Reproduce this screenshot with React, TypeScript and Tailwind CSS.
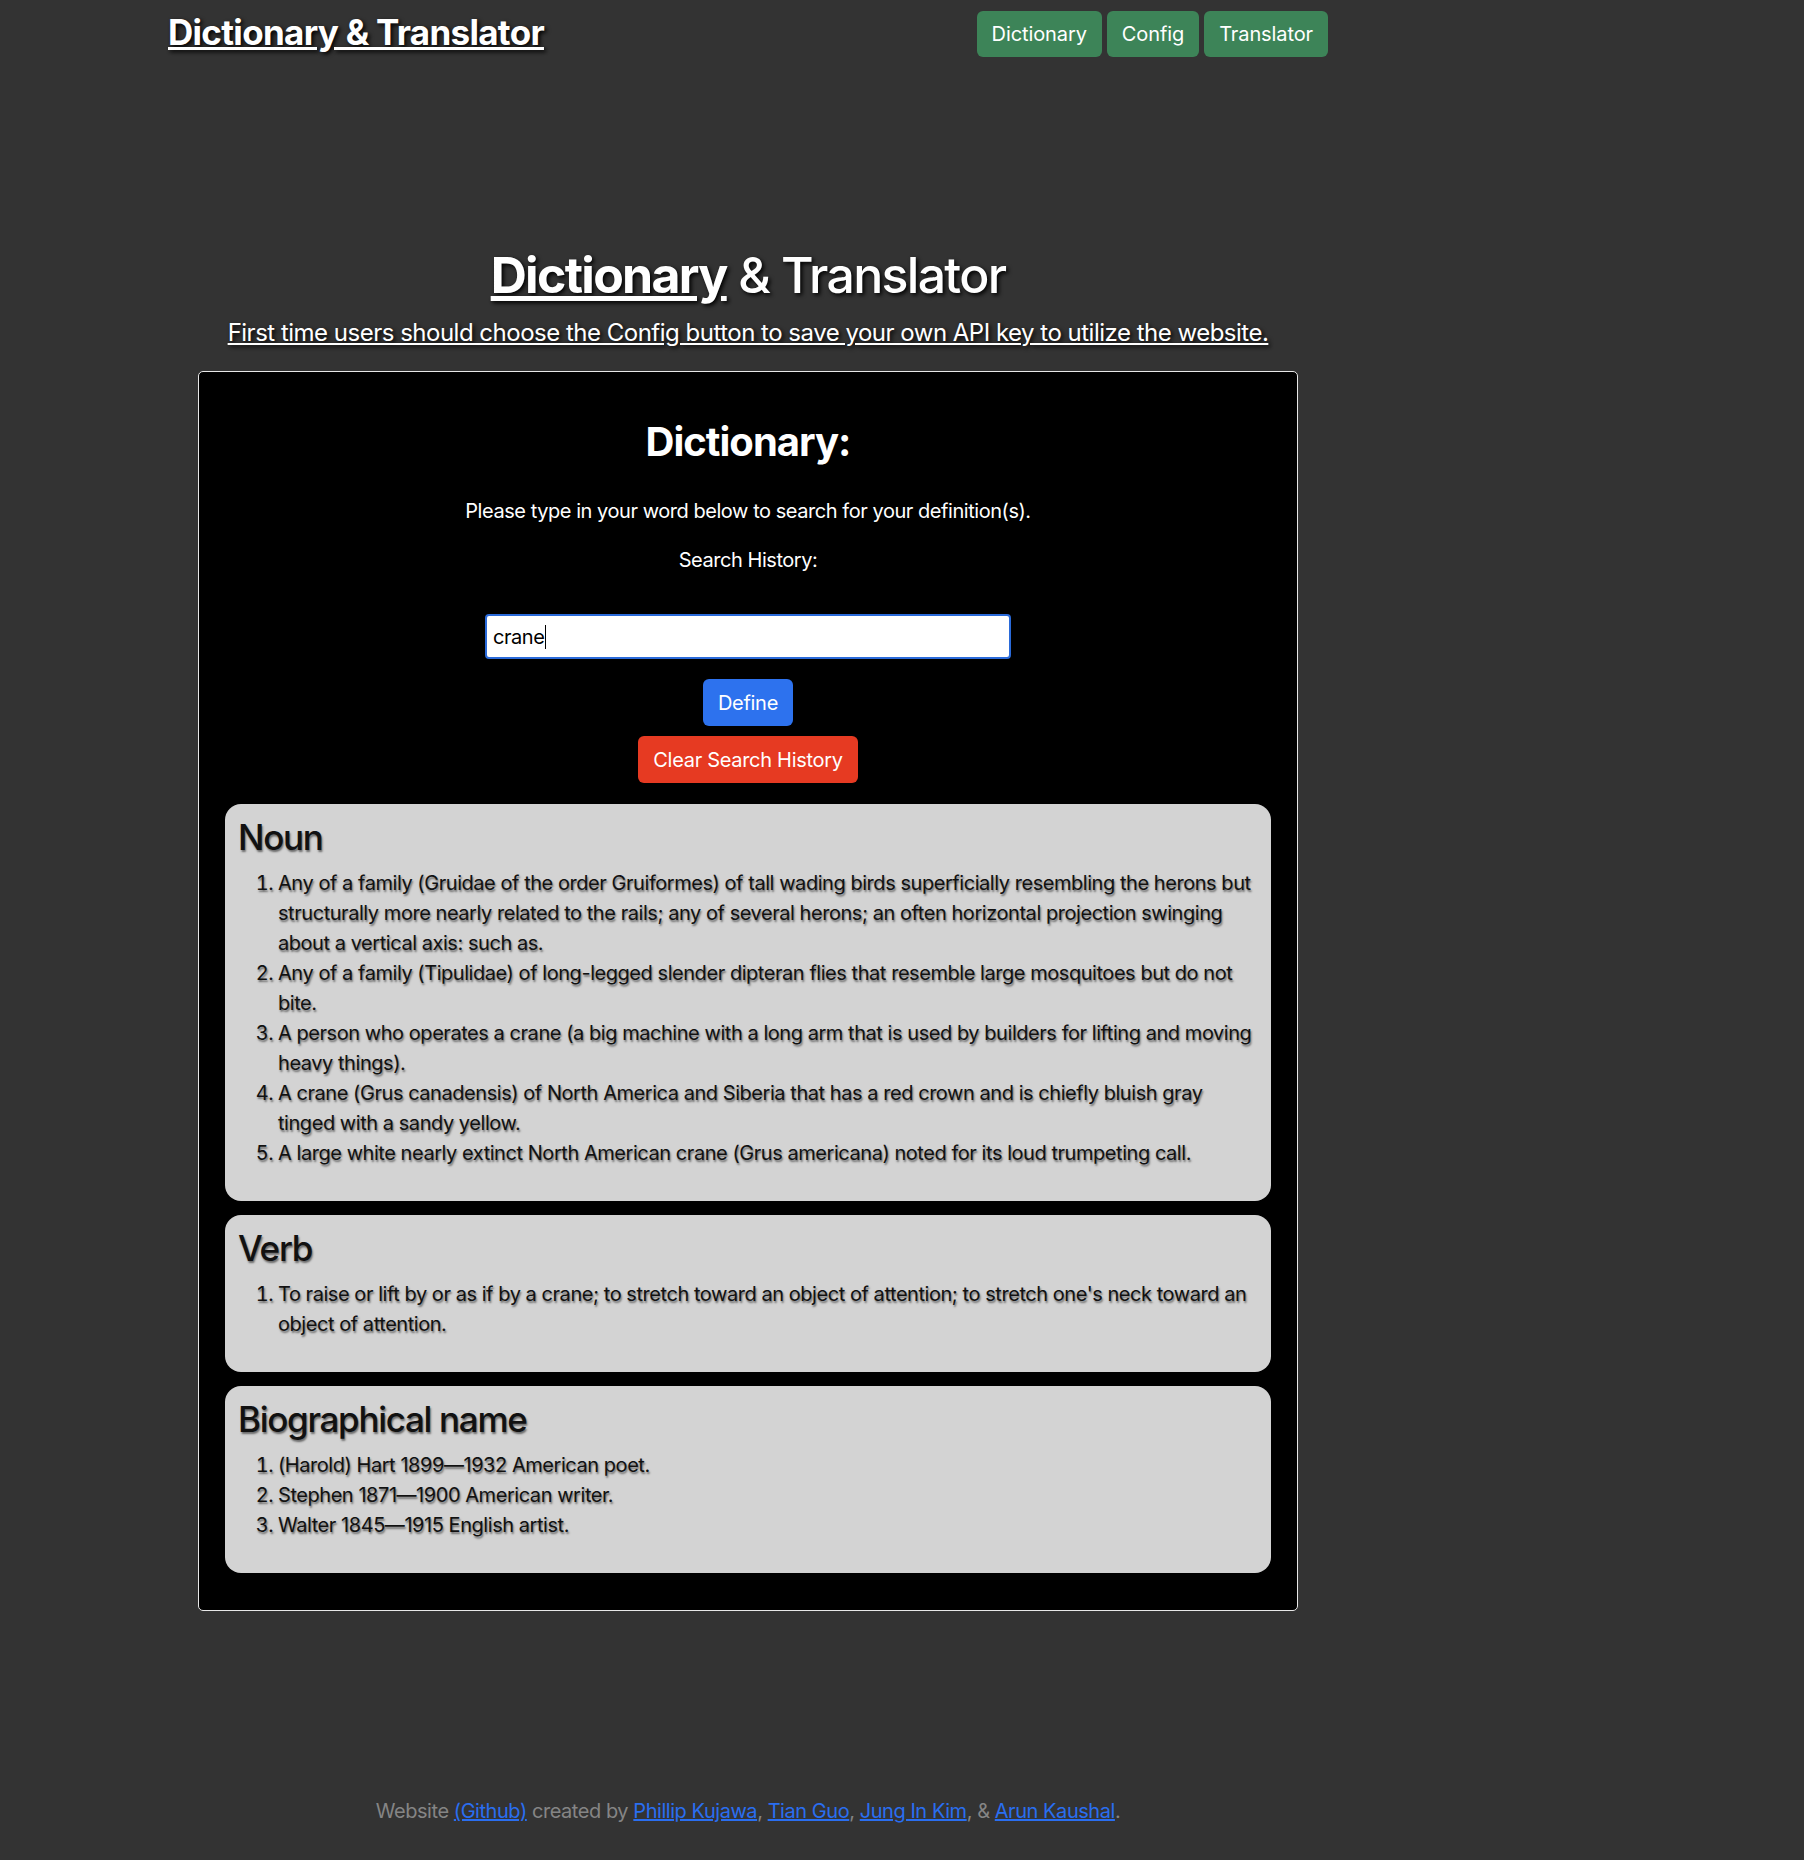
import React from "react"

const nounDefs = [
  "Any of a family (Gruidae of the order Gruiformes) of tall wading birds superficially resembling the herons but structurally more nearly related to the rails; any of several herons; an often horizontal projection swinging about a vertical axis: such as.",
  "Any of a family (Tipulidae) of long-legged slender dipteran flies that resemble large mosquitoes but do not bite.",
  "A person who operates a crane (a big machine with a long arm that is used by builders for lifting and moving heavy things).",
  "A crane (Grus canadensis) of North America and Siberia that has a red crown and is chiefly bluish gray tinged with a sandy yellow.",
  "A large white nearly extinct North American crane (Grus americana) noted for its loud trumpeting call.",
]

const verbDefs = [
  "To raise or lift by or as if by a crane; to stretch toward an object of attention; to stretch one's neck toward an object of attention.",
]

const bioDefs = [
  "(Harold) Hart 1899—1932 American poet.",
  "Stephen 1871—1900 American writer.",
  "Walter 1845—1915 English artist.",
]

function DefinitionBox({ title, items }: { title: string; items: string[] }) {
  return (
    <div className="rounded-[16px] bg-[#d3d3d3] pl-[13px] pr-[12px] pt-[12px] pb-[13px] text-[#111] [text-shadow:1px_2px_2px_rgba(0,0,0,0.5)]">
      <h3 className="mb-[10px] text-[35px] leading-[42px] font-medium tracking-[-1.3px]">{title}</h3>
      <ol className="mb-[20px] list-decimal pl-[40px] text-[20px] leading-[30px] tracking-[-0.45px]">
        {items.map((d) => (
          <li key={d}>{d}</li>
        ))}
      </ol>
    </div>
  )
}

function FooterLink({ children }: { children: React.ReactNode }) {
  return (
    <a href="#" className="text-[#2a6ef0] underline">
      {children}
    </a>
  )
}

export default function App() {
  return (
    <div className="min-h-screen bg-[#333333] font-[Inter,'Liberation_Sans',sans-serif] tracking-[-0.45px] text-white">
      <div className="ml-[168px] w-[1160px] pb-[33px]">
        {/* Header */}
        <header className="flex items-start justify-between pt-[11px]">
          <a
            href="#"
            className="text-[35px] leading-[42px] font-bold tracking-[-0.7px] underline [text-shadow:2px_2px_4px_#000]"
          >
            Dictionary &amp; Translator
          </a>
          <nav className="flex gap-[5px]">
            {["Dictionary", "Config", "Translator"].map((label) => (
              <button
                key={label}
                className="h-[46px] rounded-[6px] bg-[#3d8458] px-[15px] text-[20px] tracking-[-0.1px] text-white"
              >
                {label}
              </button>
            ))}
          </nav>
        </header>

        {/* Title */}
        <h1 className="mt-[188px] text-center text-[50px] leading-[60px] font-medium tracking-[-1.7px] [text-shadow:2px_2px_4px_#000]">
          <span className="font-bold underline">Dictionary</span> &amp; Translator
        </h1>
        <p className="mt-[10px] text-center text-[24px] leading-[36px] tracking-[-0.5px] underline [text-shadow:2px_2px_4px_#000]">
          First time users should choose the Config button to save your own API key to utilize the website.
        </p>

        {/* Dictionary card */}
        <section className="mx-[30px] mt-[20px] rounded-[5px] border border-[#e8e8e8] bg-black px-[26px] pt-[46px] pb-[37px]">
          <h2 className="text-center text-[40px] leading-[48px] font-bold tracking-[-1px]">Dictionary:</h2>
          <p className="mt-[30px] text-center text-[20px] leading-[30px]">
            Please type in your word below to search for your definition(s).
          </p>
          <p className="mt-[19px] text-center text-[20px] leading-[30px]">Search History:</p>

          <div className="mx-auto mt-[39px] flex h-[45px] w-[526px] items-center rounded-[4px] border-2 border-[#2a6ad9] bg-white px-[6px] text-[20px] text-black">
            crane
            <span className="ml-[1px] h-[24px] w-[1px] bg-black" />
          </div>

          <div className="mt-[20px] flex flex-col items-center gap-[10px]">
            <button className="h-[47px] rounded-[6px] bg-[#2d72ee] px-[15px] text-[20px] tracking-[-0.3px] text-white">
              Define
            </button>
            <button className="h-[47px] rounded-[6px] bg-[#e63a22] px-[15px] text-[20px] tracking-[-0.3px] text-white">
              Clear Search History
            </button>
          </div>

          <div className="mt-[21px] flex flex-col gap-[14px]">
            <DefinitionBox title="Noun" items={nounDefs} />
            <DefinitionBox title="Verb" items={verbDefs} />
            <DefinitionBox title="Biographical name" items={bioDefs} />
          </div>
        </section>

        {/* Footer */}
        <footer className="mt-[185px] text-center text-[20px] leading-[30px] text-[#858585]">
          Website <FooterLink>(Github)</FooterLink> created by <FooterLink>Phillip Kujawa</FooterLink>,{" "}
          <FooterLink>Tian Guo</FooterLink>, <FooterLink>Jung In Kim</FooterLink>, &amp;{" "}
          <FooterLink>Arun Kaushal</FooterLink>.
        </footer>
      </div>
    </div>
  )
}
